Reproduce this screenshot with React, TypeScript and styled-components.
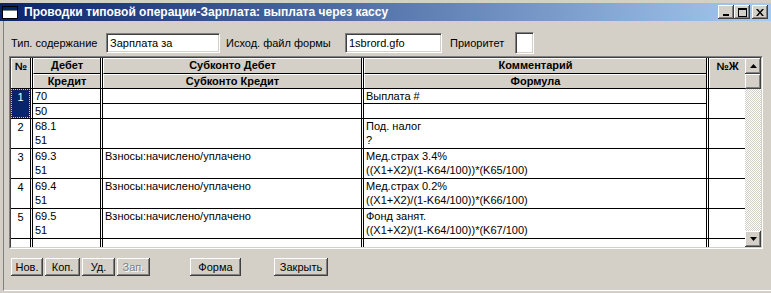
import React from 'react';
import styled, { createGlobalStyle } from 'styled-components';

const GlobalStyle = createGlobalStyle`
  html, body { margin: 0; padding: 0; background: #d4d0c8; }
  body { font-family: "Liberation Sans", Arial, sans-serif; font-size: 11px; color: #000; }
  * { box-sizing: border-box; }
`;

const raised = `box-shadow: inset -1px -1px #404040, inset 1px 1px #ffffff, inset -2px -2px #808080, inset 2px 2px #d4d0c8;`;

const Window = styled.div`
  width: 771px;
  height: 293px;
  background: #d4d0c8;
  padding-top: 3px;
  display: flex;
  flex-direction: column;
  overflow: hidden;
`;

const TitleBar = styled.div`
  height: 18px;
  flex: none;
  display: flex;
  align-items: center;
  background: linear-gradient(to right, #0a246a, #a6caf0);
  padding: 0 3px 0 2px;
`;

const TitleText = styled.div`
  margin-left: 6px;
  flex: 1;
  color: #fff;
  font-weight: bold;
  font-size: 12px;
  white-space: nowrap;
`;

const CaptionButton = styled.div<{ $gap?: boolean }>`
  width: 16px;
  height: 14px;
  background: #d4d0c8;
  ${raised}
  display: flex;
  align-items: center;
  justify-content: center;
  margin-left: ${(p) => (p.$gap ? 2 : 0)}px;
`;

const Client = styled.div`
  flex: 1;
  display: flex;
  padding-left: 3px;
  padding-bottom: 2px;
`;

const Body = styled.div`
  flex: 1;
  display: flex;
  flex-direction: column;
  border-left: 1px solid #808080;
  border-bottom: 1px solid #ffffff;
  padding: 11px 0 0 5px;
`;

const FieldsRow = styled.div`
  height: 22px;
  display: flex;
  align-items: center;
  padding-left: 2px;
`;

const FieldLabel = styled.div<{ $w: number; $pl?: number }>`
  width: ${(p) => p.$w}px;
  padding-left: ${(p) => p.$pl ?? 0}px;
  flex: none;
  white-space: nowrap;
`;

const TextInput = styled.div<{ $w: number }>`
  width: ${(p) => p.$w}px;
  height: 20px;
  flex: none;
  background: #fff;
  border: 1px solid;
  border-color: #808080 #ffffff #ffffff #808080;
  box-shadow: inset 1px 1px #404040, inset -1px -1px #d4d0c8;
  padding: 0 0 0 3px;
  line-height: 18px;
  white-space: nowrap;
  overflow: hidden;
`;

const CheckBox = styled.div`
  width: 19px;
  height: 22px;
  flex: none;
  background: #fff;
  border: 1px solid;
  border-color: #808080 #ffffff #ffffff #808080;
  box-shadow: inset 1px 1px #404040, inset -1px -1px #d4d0c8;
`;

const GridFrame = styled.div`
  margin-top: 2px;
  width: 754px;
  height: 193px;
  flex: none;
  display: flex;
  border: 1px solid;
  border-color: #808080 #ffffff #ffffff #808080;
`;

const GridInner = styled.div`
  flex: 1;
  display: flex;
  border: 1px solid;
  border-color: #404040 #d4d0c8 #d4d0c8 #404040;
  background: #fff;
  overflow: hidden;
`;

const Table = styled.div`
  width: 734px;
  flex: none;
  display: flex;
  flex-direction: column;
  overflow: hidden;
`;

const HeaderRow = styled.div`
  height: 31px;
  flex: none;
  display: flex;
  border-bottom: 1px solid #000;
`;

const HeadCol = styled.div<{ $w: number; $dbl?: boolean }>`
  width: ${(p) => p.$w}px;
  flex: none;
  display: flex;
  flex-direction: column;
  background: #fff;
  border-right: ${(p) => (p.$dbl ? '3px double #000' : 'none')};
`;

const HeadCell = styled.div<{ $top?: boolean; $span?: boolean }>`
  flex: 1;
  background: #d4d0c8;
  border-top: 1px solid #fff;
  border-left: 1px solid #fff;
  border-bottom: ${(p) => (p.$top ? '1px solid #000' : 'none')};
  font-weight: bold;
  text-align: center;
  line-height: ${(p) => (p.$span ? '14px' : '13px')};
  white-space: nowrap;
  overflow: hidden;
`;

const Record = styled.div`
  height: 30px;
  flex: none;
  display: flex;
  border-bottom: 1px solid #000;
`;

const Cell = styled.div<{ $w: number; $dbl?: boolean }>`
  width: ${(p) => p.$w}px;
  flex: none;
  display: flex;
  flex-direction: column;
  border-right: ${(p) => (p.$dbl ? '3px double #000' : 'none')};
  background: #fff;
`;

const Line = styled.div<{ $divided?: boolean }>`
  height: ${(p) => (p.$divided ? 15 : 14)}px;
  flex: none;
  padding-left: 2px;
  line-height: 14px;
  white-space: nowrap;
  overflow: hidden;
  border-bottom: ${(p) => (p.$divided ? '1px solid #000' : 'none')};
`;

const NumCell = styled.div<{ $sel?: boolean }>`
  flex: 1;
  text-align: center;
  line-height: 14px;
  background: ${(p) => (p.$sel ? '#0a246a' : '#fff')};
  color: ${(p) => (p.$sel ? '#fff' : '#000')};
  border: 1px dotted ${(p) => (p.$sel ? '#d8d0a0' : 'transparent')};
`;

const ScrollBar = styled.div`
  width: 16px;
  flex: none;
  display: flex;
  flex-direction: column;
`;

const ScrollBtn = styled.div`
  height: 16px;
  flex: none;
  background: #d4d0c8;
  ${raised}
  display: flex;
  align-items: center;
  justify-content: center;
`;

const Thumb = styled.div`
  height: 15px;
  flex: none;
  background: #d4d0c8;
  ${raised}
`;

const Track = styled.div`
  flex: 1;
  background: repeating-conic-gradient(#ffffff 0 25%, #d4d0c8 0 50%) 0 0 / 2px 2px;
`;

const ButtonsRow = styled.div`
  margin-top: 9px;
  padding-left: 2px;
  display: flex;
  align-items: center;
`;

const Btn = styled.div<{ $w: number; $ml?: number; $disabled?: boolean }>`
  width: ${(p) => p.$w}px;
  height: 18px;
  margin-left: ${(p) => p.$ml ?? 0}px;
  flex: none;
  background: #d4d0c8;
  ${raised}
  text-align: center;
  line-height: 18px;
  color: ${(p) => (p.$disabled ? '#808080' : '#000')};
  text-shadow: ${(p) => (p.$disabled ? '1px 1px #fff' : 'none')};
`;

const cols = [
  { w: 22, dbl: true },
  { w: 70, dbl: true },
  { w: 261, dbl: true },
  { w: 345, dbl: true },
  { w: 36, dbl: false },
];

const records = [
  { n: '1', d: '70', k: '50', s1: '', s2: '', c1: 'Выплата #', c2: '', sel: true },
  { n: '2', d: '68.1', k: '51', s1: '', s2: '', c1: 'Под. налог', c2: '?' },
  { n: '3', d: '69.3', k: '51', s1: 'Взносы:начислено/уплачено', s2: '', c1: 'Мед.страх 3.4%', c2: '((X1+X2)/(1-K64/100))*(K65/100)' },
  { n: '4', d: '69.4', k: '51', s1: 'Взносы:начислено/уплачено', s2: '', c1: 'Мед.страх 0.2%', c2: '((X1+X2)/(1-K64/100))*(K66/100)' },
  { n: '5', d: '69.5', k: '51', s1: 'Взносы:начислено/уплачено', s2: '', c1: 'Фонд занят.', c2: '((X1+X2)/(1-K64/100))*(K67/100)' },
  { n: '', d: '', k: '', s1: '', s2: '', c1: '', c2: '' },
];

export default function App() {
  return (
    <>
      <GlobalStyle />
      <Window>
        <TitleBar>
          <svg width="16" height="13" viewBox="0 0 16 13">
            <rect x="0.5" y="0.5" width="15" height="12" fill="#fff" stroke="#000" />
            <rect x="1" y="1" width="14" height="3" fill="#0a246a" />
            <line x1="1" y1="4.5" x2="15" y2="4.5" stroke="#808080" />
          </svg>
          <TitleText>Проводки типовой операции-Зарплата: выплата через кассу</TitleText>
          <CaptionButton>
            <svg width="8" height="7" viewBox="0 0 8 7">
              <rect x="1" y="5" width="6" height="2" fill="#000" />
            </svg>
          </CaptionButton>
          <CaptionButton>
            <svg width="9" height="9" viewBox="0 0 9 9">
              <rect x="0.5" y="0.5" width="8" height="8" fill="none" stroke="#000" />
              <rect x="0" y="0" width="9" height="2" fill="#000" />
            </svg>
          </CaptionButton>
          <CaptionButton $gap>
            <svg width="8" height="7" viewBox="0 0 8 7">
              <path d="M0 0 L2 0 L4 2.5 L6 0 L8 0 L5 3.5 L8 7 L6 7 L4 4.5 L2 7 L0 7 L3 3.5 Z" fill="#000" />
            </svg>
          </CaptionButton>
        </TitleBar>
        <Client>
          <Body>
            <FieldsRow>
              <FieldLabel $w={95}>Тип. содержание</FieldLabel>
              <TextInput $w={114}>Зарплата за</TextInput>
              <FieldLabel $w={125} $pl={6}>Исход. файл формы</FieldLabel>
              <TextInput $w={97}>1sbrord.gfo</TextInput>
              <FieldLabel $w={73} $pl={8}>Приоритет</FieldLabel>
              <CheckBox />
            </FieldsRow>
            <GridFrame>
              <GridInner>
                <Table>
                  <HeaderRow>
                    <HeadCol $w={cols[0].w} $dbl>
                      <HeadCell $span>№</HeadCell>
                    </HeadCol>
                    <HeadCol $w={cols[1].w} $dbl>
                      <HeadCell $top>Дебет</HeadCell>
                      <HeadCell>Кредит</HeadCell>
                    </HeadCol>
                    <HeadCol $w={cols[2].w} $dbl>
                      <HeadCell $top>Субконто Дебет</HeadCell>
                      <HeadCell>Субконто Кредит</HeadCell>
                    </HeadCol>
                    <HeadCol $w={cols[3].w} $dbl>
                      <HeadCell $top>Комментарий</HeadCell>
                      <HeadCell>Формула</HeadCell>
                    </HeadCol>
                    <HeadCol $w={cols[4].w}>
                      <HeadCell $span>№Ж</HeadCell>
                    </HeadCol>
                  </HeaderRow>
                  {records.map((r, i) => (
                    <Record key={i}>
                      <Cell $w={cols[0].w} $dbl>
                        <NumCell $sel={r.sel}>{r.n}</NumCell>
                      </Cell>
                      <Cell $w={cols[1].w} $dbl>
                        <Line $divided={r.sel}>{r.d}</Line>
                        <Line>{r.k}</Line>
                      </Cell>
                      <Cell $w={cols[2].w} $dbl>
                        <Line $divided={r.sel}>{r.s1}</Line>
                        <Line>{r.s2}</Line>
                      </Cell>
                      <Cell $w={cols[3].w} $dbl>
                        <Line $divided={r.sel}>{r.c1}</Line>
                        <Line>{r.c2}</Line>
                      </Cell>
                      <Cell $w={cols[4].w} />
                    </Record>
                  ))}
                </Table>
                <ScrollBar>
                  <ScrollBtn>
                    <svg width="7" height="4" viewBox="0 0 7 4">
                      <path d="M3.5 0 L7 4 L0 4 Z" fill="#000" />
                    </svg>
                  </ScrollBtn>
                  <Thumb />
                  <Track />
                  <ScrollBtn>
                    <svg width="7" height="4" viewBox="0 0 7 4">
                      <path d="M0 0 L7 0 L3.5 4 Z" fill="#000" />
                    </svg>
                  </ScrollBtn>
                </ScrollBar>
              </GridInner>
            </GridFrame>
            <ButtonsRow>
              <Btn $w={32}>Нов.</Btn>
              <Btn $w={35} $ml={2}>Коп.</Btn>
              <Btn $w={33} $ml={2}>Уд.</Btn>
              <Btn $w={33} $ml={2} $disabled>Зап.</Btn>
              <Btn $w={51} $ml={40}>Форма</Btn>
              <Btn $w={54} $ml={33}>Закрыть</Btn>
            </ButtonsRow>
          </Body>
        </Client>
      </Window>
    </>
  );
}
